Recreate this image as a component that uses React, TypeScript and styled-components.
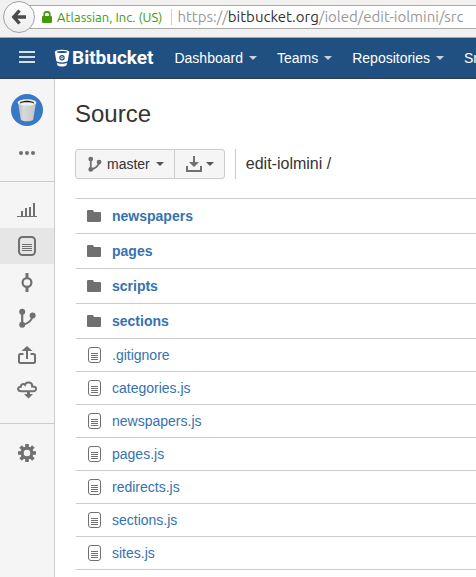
import React from "react";
import styled, { createGlobalStyle } from "styled-components";

const GlobalStyle = createGlobalStyle`
  *, *::before, *::after { box-sizing: border-box; }
  body { margin: 0; background: #fff; }
  body, button { font-family: "Liberation Sans", Arial, sans-serif; font-size: 14px; color: #333; }
  svg { display: block; flex: none; }
`;

const Page = styled.div`
  display: flex;
  flex-direction: column;
  min-height: 100vh;
  overflow: hidden;
`;

const BrowserBar = styled.div`
  display: flex;
  align-items: flex-start;
  height: 38px;
  padding-top: 1px;
  padding-left: 3px;
  background: #f2f1f0;
  border-bottom: 1px solid #a9a7a5;
`;

const BackButton = styled.button`
  display: grid;
  place-items: center;
  flex: none;
  width: 32px;
  height: 32px;
  margin: 0;
  padding: 0;
  z-index: 1;
  border: 1px solid #9aa3b0;
  border-radius: 50%;
  background: linear-gradient(#fdfdfd, #efeeed);
`;

const AddressField = styled.div`
  display: flex;
  align-items: center;
  flex: 1;
  min-width: 0;
  height: 24px;
  margin-top: 4px;
  margin-left: -10px;
  padding-left: 17px;
  overflow: hidden;
  background: #fff;
  border: solid #aaa;
  border-width: 1px 0;
  font-family: Ubuntu, "Noto Sans", sans-serif;
  white-space: nowrap;
`;

const Identity = styled.span`
  margin-left: 5px;
  padding-right: 9px;
  border-right: 1px solid #ccc;
  color: #45990b;
  font-size: 13px;
  line-height: 16px;
`;

const Address = styled.div`
  margin-left: 5px;
  color: #999;
  font-size: 15px;
  line-height: 20px;
  outline: none;
`;

const Domain = styled.span`
  color: #333;
`;

const Header = styled.header`
  display: flex;
  align-items: center;
  height: 41px;
  padding-left: 19px;
  overflow: hidden;
  background: #205081;
  border-bottom: 1px solid #2e3d54;
  white-space: nowrap;
`;

const MenuButton = styled.button`
  flex: none;
  margin: 0;
  padding: 0;
  border: 0;
  background: none;
  color: #d5dfe9;
`;

const Logo = styled.a`
  display: flex;
  align-items: center;
  gap: 2px;
  flex: none;
  margin: 0 21px 0 19px;
  color: #fff;
  font-family: Roboto, "Liberation Sans", sans-serif;
  font-size: 19px;
  font-weight: 700;
  line-height: 24px;
  text-decoration: none;
`;

const Nav = styled.nav`
  display: flex;
  gap: 20px;
`;

const NavButton = styled.button`
  display: flex;
  align-items: center;
  gap: 6px;
  margin: 0;
  padding: 0;
  border: 0;
  background: none;
  color: #fff;
  line-height: 20px;
`;

const Caret = styled.span<{ $light?: boolean }>`
  border: 4px solid transparent;
  border-top-color: ${(p) => (p.$light ? "#c7d3e0" : "#555")};
  border-bottom: 0;
`;

const Body = styled.div`
  display: flex;
  flex: 1;
`;

const Sidebar = styled.aside`
  flex: none;
  width: 55px;
  background: #f5f5f5;
  border-right: 1px solid #ccc;
  color: #707070;
`;

const SideGroup = styled.div`
  display: flex;
  flex-direction: column;
  padding: 10px 0 15px;
  & + & {
    border-top: 1px solid #ccc;
  }
`;

const SideLink = styled.a<{ $current?: boolean }>`
  display: grid;
  place-items: center;
  height: 36px;
  color: inherit;
  background: ${(p) => (p.$current ? "#e6e6e6" : "transparent")};
`;

const RepoGroup = styled(SideGroup)`
  height: 102px;
  gap: 9px;
  padding: 15px 0 0;
`;

const SettingsGroup = styled(SideGroup)`
  padding-top: 11px;
`;

const AvatarLink = styled.a`
  align-self: center;
`;

const Main = styled.main`
  flex: 1;
  min-width: 0;
  padding: 21px 0 7px 20px;
`;

const Title = styled.h1`
  margin: 0;
  font-size: 24px;
  font-weight: 400;
  line-height: 28px;
`;

const Toolbar = styled.div`
  display: flex;
  align-items: center;
  margin: 21px 0 19px;
`;

const ButtonGroup = styled.div`
  display: flex;
`;

const ToolButton = styled.button`
  display: flex;
  align-items: center;
  gap: 5px;
  height: 30px;
  margin: 0;
  padding: 0 10px 0 12px;
  border: 1px solid #ccc;
  background: #f5f5f5;
  &:first-child {
    border-radius: 3px 0 0 3px;
  }
  &:last-child {
    margin-left: -1px;
    padding-left: 11px;
    gap: 4px;
    border-radius: 0 3px 3px 0;
  }
  svg {
    color: #707070;
  }
  ${Caret} {
    margin-left: 1px;
  }
  &:last-child ${Caret} {
    margin-left: 0;
  }
`;

const Breadcrumb = styled.div`
  height: 30px;
  margin-left: 10px;
  padding-left: 10px;
  border-left: 1px solid #ccc;
  font-size: 16px;
  line-height: 30px;
`;

const FileTable = styled.table`
  width: calc(100% - 1px);
  margin-left: 1px;
  border-collapse: collapse;
  border-top: 1px solid #ccc;
`;

const FileRow = styled.tr<{ $folder?: boolean }>`
  height: ${(p) => (p.$folder ? 35 : 33)}px;
  border-bottom: 1px solid #ccc;
  font-weight: ${(p) => (p.$folder ? 700 : 400)};
`;

const FileCell = styled.td`
  padding: 0 0 0 10px;
`;

const FileLink = styled.a`
  display: flex;
  align-items: center;
  gap: 10px;
  color: #3572b0;
  line-height: 20px;
  text-decoration: none;
  svg {
    color: #707070;
  }
`;

const BackIcon = () => (
  <svg width="16" height="16" viewBox="0 0 16 16" fill="none" stroke="#4b4b4b" strokeWidth="3.4">
    <path d="M8.5 1.5 2.8 8l5.7 6.5M3 8h12" />
  </svg>
);

const LockIcon = () => (
  <svg width="10" height="12" viewBox="0 0 10 12">
    <path d="M2.2 6V3.5a2.8 2.7 0 0 1 5.6 0V6" fill="none" stroke="#45990b" strokeWidth="1.7" />
    <rect y="5" width="10" height="7" rx="1" fill="#45990b" />
  </svg>
);

const HamburgerIcon = () => (
  <svg width="16" height="16" viewBox="0 0 16 16" fill="currentColor">
    <path d="M0 1h16v2H0zM0 6h16v2H0zM0 11h16v2H0z" />
  </svg>
);

const BucketIcon = () => (
  <svg width="16" height="18" viewBox="0 0 16 18">
    <path d="M.8 3C.8-.1 15.200-.1 15.200 3l-1.500 9.100c-.8 1.900-10.600 1.900-11.400 0z" fill="#fff" />
    <path d="M2.800 13.800c2.600 1.300 7.800 1.300 10.400 0l-.6 2.500c-1.400 1.600-7.800 1.600-9.200 0z" fill="#fff" />
    <ellipse cx="8" cy="2.900" rx="5.200" ry="1" fill="#205081" />
    <circle cx="8" cy="8.700" r="2.100" fill="#fff" stroke="#205081" strokeWidth="1.2" />
    <circle cx="8" cy="8.700" r=".8" fill="#205081" />
  </svg>
);

const AvatarIcon = () => (
  <svg width="32" height="32" viewBox="0 0 32 32">
    <defs>
      <linearGradient id="pail" x1="0" x2="1">
        <stop stopColor="#b9bcbc" />
        <stop offset=".3" stopColor="#d9dada" />
        <stop offset="1" stopColor="#c3c5c5" />
      </linearGradient>
    </defs>
    <circle cx="16" cy="16" r="16" fill="#3878c5" />
    <path d="M7 8.5 9.8 25.4c.5 2.4 11.9 2.4 12.4 0L25 8.5z" fill="url(#pail)" />
    <ellipse cx="16" cy="8.4" rx="9.4" ry="3.2" fill="#f0f0ef" />
    <path d="M8.8 9.7c0-3.8 14.4-3.8 14.4 0-2.8-1.800-11.600-1.800-14.400 0z" fill="#171717" />
  </svg>
);

const DotsIcon = () => (
  <svg width="16" height="4" viewBox="0 0 16 4" fill="currentColor">
    <circle cx="2" cy="2" r="2" />
    <circle cx="8" cy="2" r="2" />
    <circle cx="14" cy="2" r="2" />
  </svg>
);

const ChartIcon = () => (
  <svg width="20" height="16" viewBox="0 0 20 16" fill="currentColor">
    <path d="M0 14h20v1H0zM4 9h2v5H4zM8 6h2v8H8zM12 5h2v9h-2zM16 1h2v13h-2z" />
  </svg>
);

const SourceIcon = () => (
  <svg width="18" height="20" viewBox="0 0 18 20" fill="none" stroke="currentColor">
    <rect x="1" y="1" width="16" height="18" rx="3.5" strokeWidth="2" />
    <path d="M4 8.5h10M4 10.5h10M4 12.5h10M4 14.5h10" />
  </svg>
);

const CommitIcon = () => (
  <svg width="12" height="20" viewBox="0 0 12 20" fill="none" stroke="currentColor">
    <circle cx="6" cy="10.5" r="4.4" strokeWidth="2.2" />
    <path d="M6 1v5M6 15v5" strokeWidth="3" />
  </svg>
);

const BranchIcon = ({ small = false }: { small?: boolean }) => (
  <svg width={small ? 14 : 17} height={small ? 16 : 20} viewBox="0 0 17 20" fill="currentColor">
    <circle cx="3.2" cy="3.8" r="3" />
    <circle cx="3.2" cy="16.8" r="3" />
    <circle cx="13.6" cy="7.6" r="3" />
    <path d="M3.2 3v14C9 15.5 13 13 13.4 8" fill="none" stroke="currentColor" strokeWidth="2.2" />
  </svg>
);

const ShareIcon = () => (
  <svg width="18" height="20" viewBox="0 -2 18 20" fill="none" stroke="currentColor" strokeWidth="2">
    <path d="M5.5 8h-3Q1 8 1 9.5v6Q1 17 2.500 17h13q1.500 0 1.500-1.500v-6Q17 8 15.500 8h-3M9 4v9" />
    <path d="M9 0l5.500 5h-11z" fill="currentColor" stroke="none" />
  </svg>
);

const CloudIcon = () => (
  <svg width="20" height="18" viewBox="0 0 20 18">
    <path
      d="M4.500 10.200C0 10.200.2 6 3.800 5.800 3.600 3 6.600 2.400 8 3.800c1.200-3.600 7.600-3 7.200 1.800 5.200-.4 4.800 4.600 1 4.600z"
      fill="none"
      stroke="currentColor"
      strokeWidth="2"
    />
    <path d="M10 10h3v3h3l-4.500 4.500L7 13h3z" fill="currentColor" />
  </svg>
);

const GearIcon = () => (
  <svg width="18" height="18" viewBox="0 0 18 18" fill="none" stroke="currentColor">
    <circle cx="9" cy="9" r="4.9" strokeWidth="3.2" />
    <path
      d="M9 0v4M9 14v4M0 9h4M14 9h4M2.600 2.600l2.900 2.900M12.500 12.500l2.900 2.900M15.400 2.600l-2.900 2.900M5.500 12.500l-2.900 2.900"
      strokeWidth="3.6"
    />
  </svg>
);

const DownloadIcon = () => (
  <svg width="16" height="16" viewBox="0 0 16 16" fill="currentColor">
    <path d="M7 0h2v6h4l-5 5-5-5h4zM0 10h2v4h12v-4h2v6H0z" />
  </svg>
);

const FolderIcon = () => (
  <svg width="16" height="14" viewBox="0 0 16 14" fill="currentColor">
    <path d="M2 1h5l1 2h6q1 0 1 1v8q0 1-1 1H2q-1 0-1-1V2q0-1 1-1z" />
  </svg>
);

const FileIcon = () => (
  <svg width="16" height="16" viewBox="0 0 16 16" fill="none" stroke="currentColor">
    <rect x="2.5" y=".5" width="12" height="15" rx="2.5" />
    <path d="M5 6.5h7M5 8.5h7M5 10.5h7M5 12.5h7" />
  </svg>
);

const repoLinks = [
  { label: "Overview", icon: <ChartIcon /> },
  { label: "Source", icon: <SourceIcon />, current: true },
  { label: "Commits", icon: <CommitIcon /> },
  { label: "Branches", icon: <BranchIcon /> },
  { label: "Pull requests", icon: <ShareIcon /> },
  { label: "Downloads", icon: <CloudIcon /> },
];

const folders = ["newspapers", "pages", "scripts", "sections"];
const files = [
  ".gitignore",
  "categories.js",
  "newspapers.js",
  "pages.js",
  "redirects.js",
  "sections.js",
  "sites.js",
];

export default function App() {
  return (
    <Page>
      <GlobalStyle />
      <BrowserBar>
        <BackButton aria-label="Back">
          <BackIcon />
        </BackButton>
        <AddressField>
          <LockIcon />
          <Identity>Atlassian, Inc. (US)</Identity>
          <Address role="textbox" aria-label="Address" contentEditable suppressContentEditableWarning>
            https://<Domain>bitbucket.org</Domain>/ioled/edit-iolmini/src
          </Address>
        </AddressField>
      </BrowserBar>
      <Header>
        <MenuButton aria-label="Menu">
          <HamburgerIcon />
        </MenuButton>
        <Logo href="#">
          <BucketIcon />
          Bitbucket
        </Logo>
        <Nav>
          {["Dashboard", "Teams", "Repositories", "Snippets"].map((name) => (
            <NavButton key={name}>
              {name}
              <Caret $light />
            </NavButton>
          ))}
        </Nav>
      </Header>
      <Body>
        <Sidebar>
          <RepoGroup>
            <AvatarLink href="#" aria-label="Repository">
              <AvatarIcon />
            </AvatarLink>
            <SideLink href="#" aria-label="Actions">
              <DotsIcon />
            </SideLink>
          </RepoGroup>
          <SideGroup>
            {repoLinks.map((item) => (
              <SideLink key={item.label} href="#" aria-label={item.label} $current={item.current}>
                {item.icon}
              </SideLink>
            ))}
          </SideGroup>
          <SettingsGroup>
            <SideLink href="#" aria-label="Settings">
              <GearIcon />
            </SideLink>
          </SettingsGroup>
        </Sidebar>
        <Main>
          <Title>Source</Title>
          <Toolbar>
            <ButtonGroup>
              <ToolButton>
                <BranchIcon small />
                master
                <Caret />
              </ToolButton>
              <ToolButton aria-label="Download">
                <DownloadIcon />
                <Caret />
              </ToolButton>
            </ButtonGroup>
            <Breadcrumb>edit-iolmini /</Breadcrumb>
          </Toolbar>
          <FileTable>
            <tbody>
              {folders.map((name) => (
                <FileRow key={name} $folder>
                  <FileCell>
                    <FileLink href="#">
                      <FolderIcon />
                      {name}
                    </FileLink>
                  </FileCell>
                </FileRow>
              ))}
              {files.map((name) => (
                <FileRow key={name}>
                  <FileCell>
                    <FileLink href="#">
                      <FileIcon />
                      {name}
                    </FileLink>
                  </FileCell>
                </FileRow>
              ))}
            </tbody>
          </FileTable>
        </Main>
      </Body>
    </Page>
  );
}
